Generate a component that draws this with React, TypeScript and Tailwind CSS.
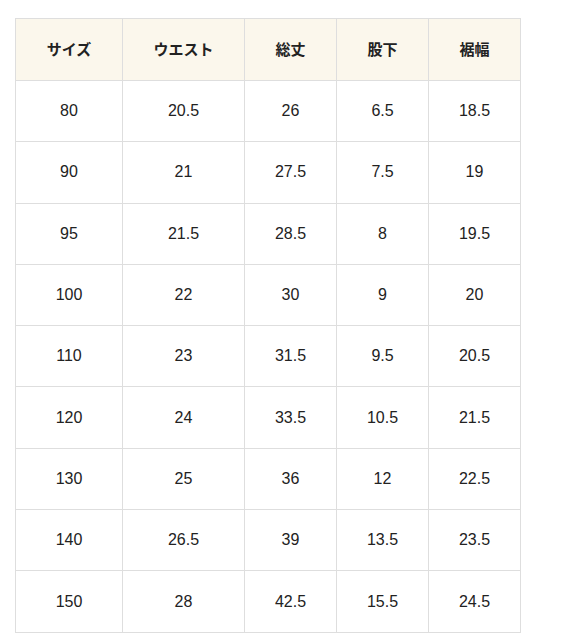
import React from "react";

const headers = ["サイズ", "ウエスト", "総丈", "股下", "裾幅"];
const rows = [
  ["80", "20.5", "26", "6.5", "18.5"],
  ["90", "21", "27.5", "7.5", "19"],
  ["95", "21.5", "28.5", "8", "19.5"],
  ["100", "22", "30", "9", "20"],
  ["110", "23", "31.5", "9.5", "20.5"],
  ["120", "24", "33.5", "10.5", "21.5"],
  ["130", "25", "36", "12", "22.5"],
  ["140", "26.5", "39", "13.5", "23.5"],
  ["150", "28", "42.5", "15.5", "24.5"],
];

export default function App() {
  return (
    <div className="w-[582px] h-[640px] bg-white overflow-hidden pt-[18px] pl-[15px] font-['Noto_Sans_CJK_JP','Noto_Sans',sans-serif] text-[#222]">
      <table className="border-collapse table-fixed w-[505px]">
        <colgroup>
          <col className="w-[107px]" />
          <col className="w-[122px]" />
          <col className="w-[92px]" />
          <col className="w-[92px]" />
          <col className="w-[92px]" />
        </colgroup>
        <thead>
          <tr className="h-[62px] bg-[#fbf7ec]">
            {headers.map((h) => (
              <th
                key={h}
                className="border border-[#dedede] text-center align-middle text-[15px] font-bold"
              >
                {h}
              </th>
            ))}
          </tr>
        </thead>
        <tbody>
          {rows.map((r, i) => (
            <tr key={i} className="h-[61.3px]">
              {r.map((c, j) => (
                <td
                  key={j}
                  className="border border-[#dedede] text-center align-middle text-[16px] font-normal font-['Liberation_Sans','Noto_Sans_CJK_JP',sans-serif]"
                >
                  {c}
                </td>
              ))}
            </tr>
          ))}
        </tbody>
      </table>
    </div>
  );
}
